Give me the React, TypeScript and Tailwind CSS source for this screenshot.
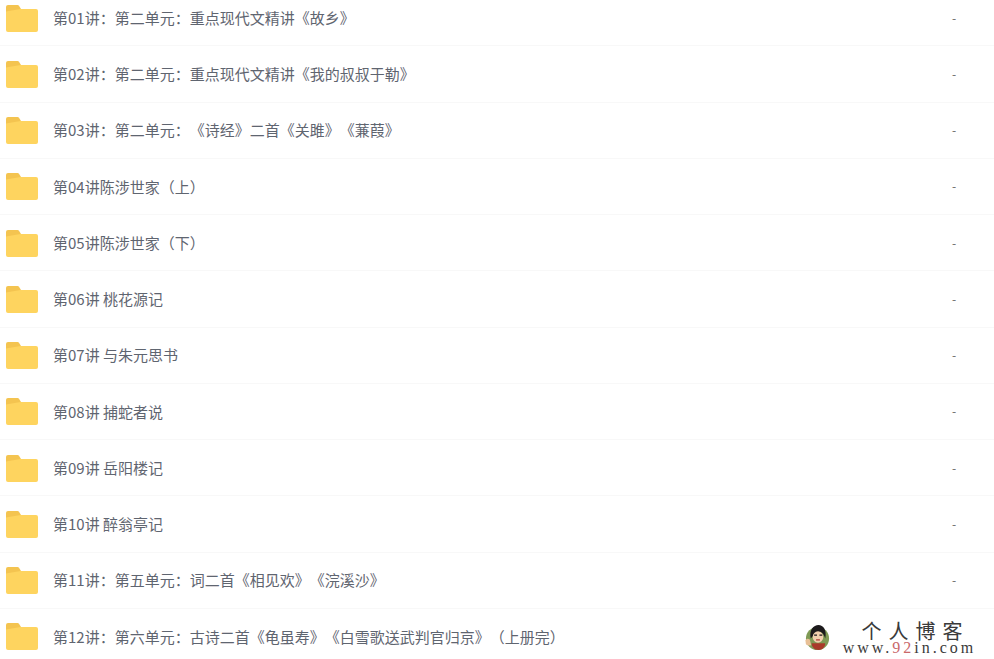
import React from 'react';

const lessons = [
  '第01讲：第二单元：重点现代文精讲《故乡》',
  '第02讲：第二单元：重点现代文精讲《我的叔叔于勒》',
  '第03讲：第二单元：《诗经》二首《关雎》《蒹葭》',
  '第04讲陈涉世家（上）',
  '第05讲陈涉世家（下）',
  '第06讲 桃花源记',
  '第07讲 与朱元思书',
  '第08讲 捕蛇者说',
  '第09讲 岳阳楼记',
  '第10讲 醉翁亭记',
  '第11讲：第五单元：词二首《相见欢》《浣溪沙》',
  '第12讲：第六单元：古诗二首《龟虽寿》《白雪歌送武判官归京》（上册完）',
];

function FolderIcon() {
  return (
    <svg width="32" height="27" viewBox="0 0 32 27" className="shrink-0">
      <path d="M0 2a2 2 0 0 1 2-2h9.5a2 2 0 0 1 1.5.7L15 4v3H0z" fill="#f4c450" />
      <path d="M0 6.5L14.5 4H30a2 2 0 0 1 2 2v19a2 2 0 0 1-2 2H2a2 2 0 0 1-2-2z" fill="#fed45f" />
    </svg>
  );
}

function Avatar() {
  return (
    <svg width="27" height="27" viewBox="0 0 28 28" className="shrink-0">
      <ellipse cx="14" cy="15" rx="12" ry="12" fill="#7f9a55" />
      <path d="M7 15C5 6 10 1 15 1s9 5 7 14c-1-4-3-6-5-7-3 2-7 3-10 7z" fill="#1c1a1c" />
      <ellipse cx="14.5" cy="13.5" rx="5.5" ry="6" fill="#f1cfae" />
      <path d="M10.5 11.5h3M16 11.5h3" stroke="#1c1a1c" strokeWidth="1.4" />
      <path d="M12.5 16.5h4" stroke="#a8322c" strokeWidth="1.2" />
      <path d="M8 20h14c0 4-3 7-7 7s-7-3-7-7z" fill="#a93a2a" />
      <path d="M1.5 17c1-2 3-2 4.5-1l1.5 6c-2 1-4.500 0-5.500-1z" fill="#e8c096" />
    </svg>
  );
}

function Row({ title, size }: { title: string; size?: string }) {
  return (
    <div className="h-[56.25px] flex items-center border-b border-[#f8f8f8]">
      <div className="w-[53px] pl-[6px] pt-[1px] shrink-0">
        <FolderIcon />
      </div>
      <div className="flex-1 pt-[1px] text-[15px] text-[#5f6570] whitespace-nowrap [text-spacing-trim:space-all]">{title}</div>
      <div className="w-[42px] shrink-0 text-xs text-[#666]">{size}</div>
    </div>
  );
}

export default function App() {
  return (
    <div className="relative w-[994px] h-[659px] overflow-hidden bg-white font-['Noto_Sans_CJK_SC','Noto_Sans',sans-serif]">
      <div className="-mt-[10px]">
        {lessons.map((t, i) => (
          <Row key={t} title={t} size={i < lessons.length - 1 ? '-' : undefined} />
        ))}
      </div>
      {/* watermark sits over the last row */}
      <div className="absolute left-[796px] top-[616px] w-[198px] h-[43px] pl-[8px] bg-white flex items-center gap-[12px]">
        <Avatar />
        <div className="w-[133px] flex flex-col items-center text-[#3a3a3a]">
          <div className="text-[20px] leading-[19px] tracking-[7px] pl-[12px] font-['Noto_Sans_CJK_SC',serif]">个人博客</div>
          <div className="text-[16px] leading-[15px] tracking-[3px] whitespace-nowrap font-['Liberation_Serif',serif]">
            www.<span className="text-[#c9686a]">92</span>in.com
          </div>
        </div>
      </div>
    </div>
  );
}
